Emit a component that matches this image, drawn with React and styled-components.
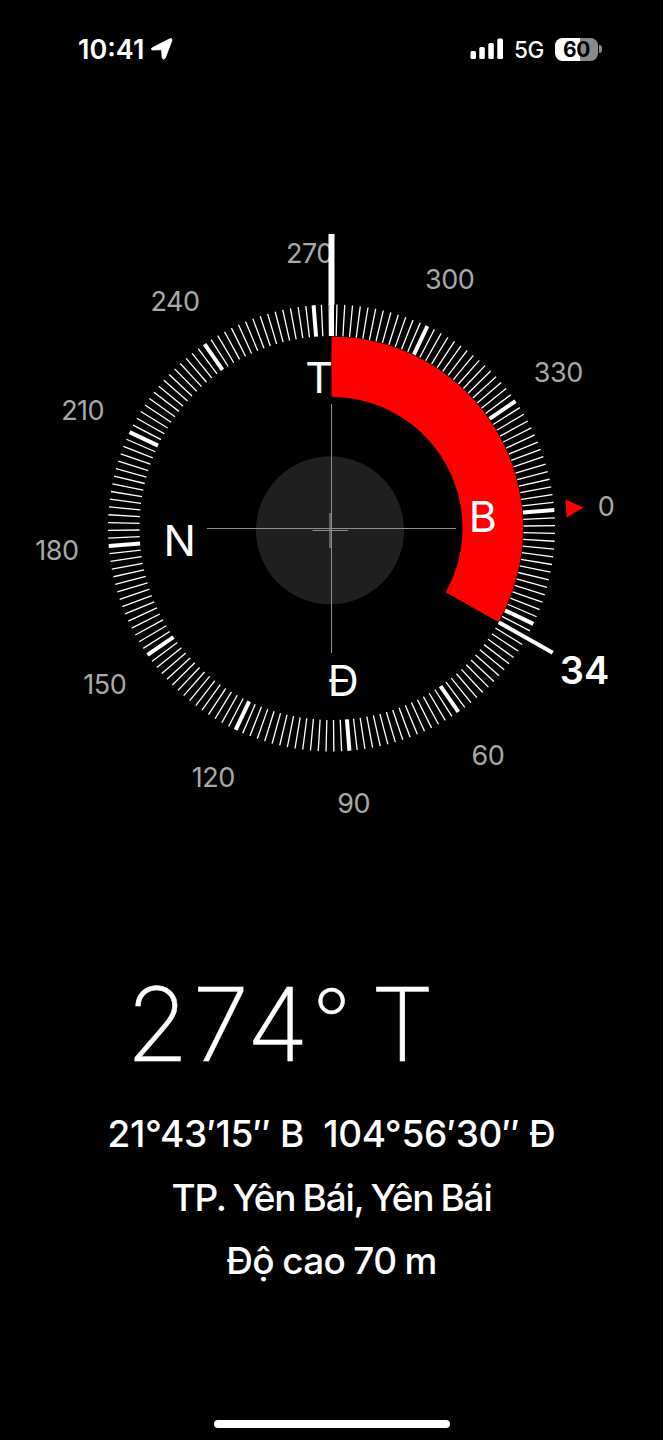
import React from 'react';
import styled, { createGlobalStyle } from 'styled-components';

const HEADING = 274.6;
const BEARING = 34;
const CX = 331.5;
const CY = 328;

const GlobalStyle = createGlobalStyle`
  body {
    margin: 0;
    background: #000;
  }
`;

const Screen = styled.div`
  width: 663px;
  height: 1440px;
  overflow: hidden;
  background: #000;
  color: white;
  font-family: Inter, 'Liberation Sans', sans-serif;
  display: flex;
  flex-flow: column nowrap;
`;

const StatusBar = styled.header`
  height: 200px;
  box-sizing: border-box;
  padding: 34px 61px 0 78px;
  display: flex;
  flex-flow: row nowrap;
  justify-content: space-between;
  align-items: flex-start;
`;

const StatusGroup = styled.div`
  height: 30px;
  display: flex;
  flex-flow: row nowrap;
  align-items: center;
`;

const Time = styled.span`
  width: 73px;
  margin: 2px 0 0 0;
  font-size: 27px;
  font-weight: 600;
  letter-spacing: 0;
  line-height: 30px;
  white-space: nowrap;
`;

const Network = styled.span`
  width: 41px;
  margin: 2px 0 0 10px;
  font-size: 22.5px;
  font-weight: 500;
  line-height: 30px;
  letter-spacing: -0.5px;
`;

const Battery = styled.div`
  width: 43px;
  height: 23px;
  border-radius: 7.5px;
  background: linear-gradient(90deg, #fff 59%, #8a8a8a 59%);
  color: black;
  font-size: 21px;
  font-weight: 700;
  line-height: 23px;
  letter-spacing: -0.5px;
  text-align: center;
`;

const BatteryCap = styled.div`
  width: 3px;
  height: 8px;
  margin: 0 0 0 1px;
  border-radius: 0 3px 3px 0;
  background: #8a8a8a;
`;

const Dial = styled.svg`
  display: block;
  flex: none;
  font-family: inherit;
`;

const DegreeLabel = styled.text`
  fill: #a8a8a8;
  font-size: 27px;
  letter-spacing: -0.5px;
  text-anchor: middle;
`;

const Cardinal = styled.text`
  fill: white;
  font-size: 43px;
  text-anchor: middle;
`;

const BearingLabel = styled.text`
  fill: white;
  font-size: 38px;
  font-weight: 600;
  text-anchor: middle;
`;

const Readout = styled.main`
  flex: 1;
  display: flex;
  flex-flow: column nowrap;
  align-items: center;
`;

const Heading = styled.h1`
  width: 411px;
  height: 122px;
  margin: 103px 0 17px 0;
  font-size: 102px;
  font-weight: 250;
  line-height: 122px;
  letter-spacing: 3.5px;
  white-space: nowrap;
  -webkit-text-stroke: 0.5px white;
  display: flex;
  flex-flow: row nowrap;
`;

const DegreeSign = styled.span`
  width: 58px;
  font-size: 84px;
  font-weight: 250;
  line-height: 114px;
`;

const Info = styled.p`
  height: 63.5px;
  margin: 0;
  font-size: 37px;
  font-weight: 500;
  line-height: 63.5px;
  letter-spacing: ${(props) => props.$spacing || '-0.3px'};
  word-spacing: ${(props) => props.$gap || '0'};
  white-space: pre;
`;

const HomeIndicator = styled.div`
  width: 236px;
  height: 7.5px;
  margin: 0 auto 12.5px auto;
  border-radius: 4px;
  background: white;
`;

// dial angles run clockwise from the top of the screen
const polar = (angle, radius) => {
  const rad = (angle * Math.PI) / 180;
  return [CX + radius * Math.sin(rad), CY - radius * Math.cos(rad)];
};

const RadialLine = ({ angle, from, to, width }) => {
  const [x1, y1] = polar(angle, from);
  const [x2, y2] = polar(angle, to);
  return <line x1={x1} y1={y1} x2={x2} y2={y2} stroke="white" strokeWidth={width} />;
};

const sectorPath = (start, end, inner, outer) => {
  const [ax, ay] = polar(start, outer);
  const [bx, by] = polar(end, outer);
  const [cx, cy] = polar(end, inner);
  const [dx, dy] = polar(start, inner);
  return `M${ax} ${ay}A${outer} ${outer} 0 0 1 ${bx} ${by}L${cx} ${cy}A${inner} ${inner} 0 0 0 ${dx} ${dy}Z`;
};

const ticks = Array.from({ length: 180 }, (_, i) => i * 2);
// a label too close to the saved bearing gives way to it
const degrees = ticks.filter((deg) => deg % 30 === 0 && Math.abs(deg - BEARING) > 10);
const cardinals = [
  { name: 'B', deg: 0 },
  { name: 'Đ', deg: 90 },
  { name: 'N', deg: 180 },
  { name: 'T', deg: 270 },
];

const Compass = () => {
  const bearingAngle = 360 + BEARING - HEADING;

  return (
    <Dial width="663" height="660" viewBox="0 0 663 660">
      <circle cx="330" cy="330.3" r="74" fill="#1f1f1f" />
      <path d="M207 328.5H456M331.5 204V453" stroke="#8f8f8f" strokeWidth="1" />
      <path d="M312.5 330.5H348M330 313V348" stroke="#8f8f8f" strokeWidth="1.2" />

      <path d={sectorPath(0, bearingAngle, 131, 191.5)} fill="#ff0000" />

      {ticks.map((deg) => (
        <RadialLine
          key={deg}
          angle={deg - HEADING}
          from={192}
          to={223.5}
          width={deg % 30 === 0 ? 4 : 1.3}
        />
      ))}

      {degrees.map((deg) => {
        const [x, y] = polar(deg - HEADING, 275.5);
        return (
          <DegreeLabel key={deg} x={x} y={y + 10}>
            {deg}
          </DegreeLabel>
        );
      })}

      {cardinals.map(({ name, deg }) => {
        const [x, y] = polar(deg - HEADING, 152);
        return (
          <Cardinal key={name} x={x - 0.3} y={y + 16.2}>
            {name}
          </Cardinal>
        );
      })}

      <path d="M328.5 34H334.5V105H334V136H330V105H328.5Z" fill="white" />
      <RadialLine angle={bearingAngle} from={192} to={254} width={4} />
      <BearingLabel x="584.5" y="484">{BEARING}</BearingLabel>
      <path d="M565.5 299.5L583.5 307.5L566.5 317.5Z" fill="#ff0000" />
    </Dial>
  );
};

const App = () => (
  <Screen>
    <GlobalStyle />
    <StatusBar>
      <StatusGroup>
        <Time>10:41</Time>
        <svg width="22" height="22" viewBox="0 0 22 22">
          <path
            d="M1.2 9.8L18.8 0.8Q21.6 -0.2 20.9 2.8L14.2 20.2Q12.6 22.4 11.2 20.2L10.6 12.6Q10.5 11.8 9.7 11.8L1.5 12Q-0.8 11.4 1.2 9.8Z"
            fill="white"
            stroke="white"
            strokeWidth="0.8"
          />
        </svg>
      </StatusGroup>
      <StatusGroup>
        <svg width="34" height="22" viewBox="0 0 34 22">
          <rect x="0.5" y="13" width="5.5" height="8" rx="1.5" fill="white" />
          <rect x="9.3" y="9" width="5.5" height="12" rx="1.5" fill="white" />
          <rect x="18.3" y="5" width="5.5" height="16" rx="1.5" fill="white" />
          <rect x="27.3" y="0.5" width="5.7" height="20.5" rx="1.5" fill="white" />
        </svg>
        <Network>5G</Network>
        <Battery>60</Battery>
        <BatteryCap />
      </StatusGroup>
    </StatusBar>
    <Compass />
    <Readout>
      <Heading>
        <span>274</span>
        <DegreeSign>°</DegreeSign>
        <span>T</span>
      </Heading>
      <Info>21°43′15″ B  104°56′30″ Đ</Info>
      <Info $spacing="-1.2px" $gap="-1.5px">TP. Yên Bái, Yên Bái</Info>
      <Info $spacing="-0.7px" $gap="-1px">Độ cao 70 m</Info>
    </Readout>
    <HomeIndicator />
  </Screen>
);

export default App;
